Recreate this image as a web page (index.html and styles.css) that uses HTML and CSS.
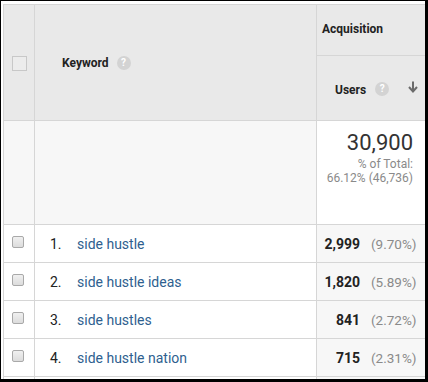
FILE: index.html
```html
<!DOCTYPE html>
<html>
<head>
<meta charset="utf-8">
<link rel="stylesheet" href="styles.css">
</head>
<body>
<div class="frame">
  <table class="report">
    <colgroup>
      <col class="c-check">
      <col class="c-key">
      <col class="c-users">
    </colgroup>
    <thead>
      <tr class="h1">
        <th class="check" rowspan="2"><span class="hbox"></span></th>
        <th class="key" rowspan="2"><span class="hlabel">Keyword</span><span class="help">?</span></th>
        <th class="group">Acquisition</th>
      </tr>
      <tr class="h2">
        <th class="metric"><span class="hlabel">Users</span><span class="help">?</span><svg class="sort" width="10" height="12" viewBox="0 0 10 12"><path d="M5 0.5v9M1 6l4 4.5 4-4.5" fill="none" stroke="#6b6b6b" stroke-width="2"/></svg></th>
      </tr>
    </thead>
    <tbody>
      <tr class="totals">
        <td class="check"></td>
        <td class="key"></td>
        <td class="total">
          <div class="big">30,900</div>
          <div class="small">% of Total:<br>66.12% (46,736)</div>
        </td>
      </tr>
      <tr class="row">
        <td class="check"><span class="cb"></span></td>
        <td class="key"><span class="idx">1.</span><a class="kw">side hustle</a></td>
        <td class="val"><b>2,999</b><span class="pct">(9.70%)</span></td>
      </tr>
      <tr class="row">
        <td class="check"><span class="cb"></span></td>
        <td class="key"><span class="idx">2.</span><a class="kw">side hustle ideas</a></td>
        <td class="val"><b>1,820</b><span class="pct">(5.89%)</span></td>
      </tr>
      <tr class="row">
        <td class="check"><span class="cb"></span></td>
        <td class="key"><span class="idx">3.</span><a class="kw">side hustles</a></td>
        <td class="val"><b>841</b><span class="pct">(2.72%)</span></td>
      </tr>
      <tr class="row">
        <td class="check"><span class="cb"></span></td>
        <td class="key"><span class="idx">4.</span><a class="kw">side hustle nation</a></td>
        <td class="val"><b>715</b><span class="pct">(2.31%)</span></td>
      </tr>
      <tr class="row">
        <td class="check"></td>
        <td class="key"></td>
        <td class="val"></td>
      </tr>
    </tbody>
  </table>
</div>
</body>
</html>
```
FILE: styles.css
```css
html, body {
  margin: 0;
  padding: 0;
  background: #fff;
}
.frame {
  width: 428px;
  height: 382px;
  box-sizing: border-box;
  border-top: 1px solid #000;
  border-left: 1px solid #000;
  border-right: 3px solid #000;
  border-bottom: 3px solid #000;
  padding: 3px 0 0 2px;
  overflow: hidden;
  background: #fff;
  font-family: Roboto, "Liberation Sans", Arial, sans-serif;
}
.report {
  border-collapse: collapse;
  table-layout: fixed;
  width: 460px;
  color: #222;
}
.c-check { width: 31px; }
.c-key { width: 282px; }
.c-users { width: 147px; }
.report th, .report td {
  border: 1px solid #d6d6d6;
  padding: 0;
  box-sizing: border-box;
}
.report thead th {
  background: #e9e9e9;
  font-weight: bold;
  font-size: 12px;
  text-align: left;
  vertical-align: middle;
}
.h1 { height: 51px; }
.h2 { height: 65px; }
.hbox {
  display: block;
  width: 13px;
  height: 13px;
  margin-left: 8px;
  margin-top: 1px;
  border: 1px solid #c8c8c8;
  background: #ececec;
}
.key .hlabel { margin-left: 27px; }
.hlabel { vertical-align: middle; }
.help {
  display: inline-block;
  width: 14px;
  height: 14px;
  border-radius: 50%;
  background: #d3d3d3;
  color: #fff;
  font-size: 10px;
  font-weight: bold;
  line-height: 14px;
  text-align: center;
  margin-left: 8px;
  vertical-align: middle;
}
.group { padding-left: 5px !important; padding-bottom: 2px !important; }
.metric { padding-left: 18px !important; white-space: nowrap; padding-top: 2px !important; }
.metric .help { margin-left: 9px; }
.sort { vertical-align: middle; margin-left: 19px; margin-top: -4px; }

.totals { height: 104px; }
.totals td { background: #f7f7f7; vertical-align: top; }
.totals .total {
  background: #fff;
  text-align: right;
  padding-right: 50px;
}
.big {
  font-size: 22px;
  color: #333;
  line-height: 26px;
  margin-top: 9px;
}
.small {
  font-size: 12px;
  color: #8a8a8a;
  line-height: 14px;
  margin-top: 1px;
}
.row { height: 38px; }
.row td { vertical-align: middle; font-size: 14px; }
.row .val { background: #f7f7f7; text-align: left; white-space: nowrap; }
.cb {
  display: block;
  width: 12px;
  height: 12px;
  box-sizing: border-box;
  margin-left: 8px;
  margin-top: -3px;
  border: 1px solid #a9a9a9;
  border-radius: 2px;
  background: linear-gradient(#f0f0f0, #dcdcdc);
}
.idx {
  display: inline-block;
  margin-left: 15px;
  width: 27px;
  color: #222;
}
.kw { color: #2f5f8f; text-decoration: none; }
.val b {
  display: inline-block;
  width: 43px;
  text-align: right;
  font-weight: bold;
  color: #222;
  font-size: 14px;
}
.pct {
  display: inline-block;
  margin-left: 11px;
  color: #8a8a8a;
  font-size: 13.5px;
}
```
